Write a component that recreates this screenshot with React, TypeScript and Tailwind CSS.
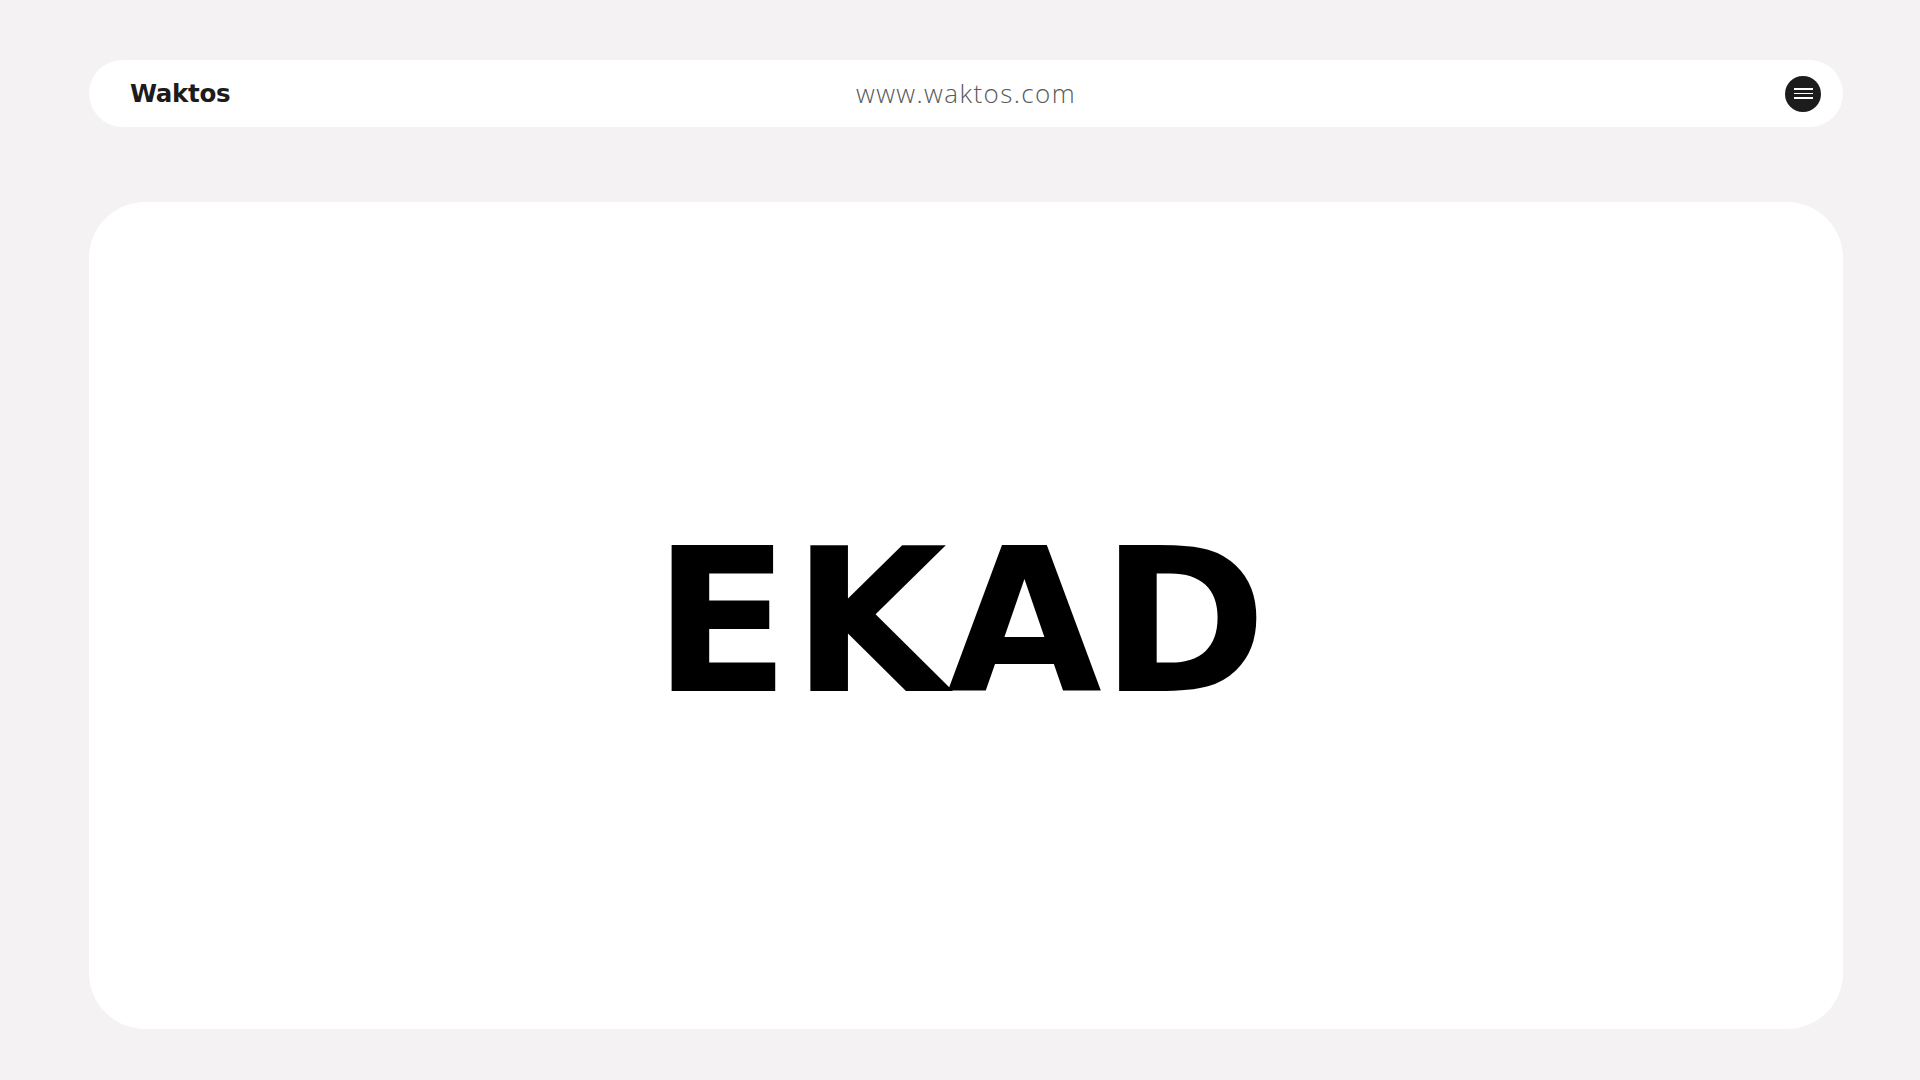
export default function App() {
  return (
    <div className="min-h-screen w-full bg-[#f4f2f3] pl-[89px] pr-[77px] pt-[60px] pb-[50px]">
      <header className="flex h-[67px] items-center justify-between rounded-full bg-white pl-[41px] pr-[22px]">
        <span className="w-[200px] pt-[2px] font-['DejaVu_Sans',sans-serif] text-[24.5px] font-bold tracking-[-0.3px] text-[#1c1c1c]">
          Waktos
        </span>
        <span className="font-['Open_Sans',sans-serif] text-[26px] font-light tracking-[1.4px] text-[#5a5a5a]">
          www.waktos.com
        </span>
        <div className="flex w-[219px] justify-end">
          <button className="flex h-[36px] w-[36px] flex-col items-center justify-center gap-[3px] rounded-full bg-[#1d1c1d]">
            <span className="h-[1.5px] w-[19px] bg-white" />
            <span className="h-[1.5px] w-[19px] bg-white" />
            <span className="h-[1.5px] w-[19px] bg-white" />
          </button>
        </div>
      </header>

      <main className="mt-[75px] flex h-[827px] items-center justify-center rounded-[56px] bg-white pt-[13px] pr-[12px]">
        <h1 className="flex font-['DejaVu_Sans',sans-serif] text-[200px] font-bold leading-none text-black">
          <span className="tracking-[2px]">E</span>
          <span className="tracking-[0px]">K</span>
          <span className="tracking-[-1px]">A</span>
          <span>D</span>
        </h1>
      </main>
    </div>
  );
}
